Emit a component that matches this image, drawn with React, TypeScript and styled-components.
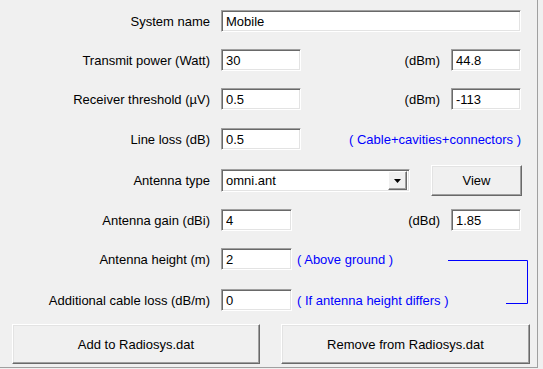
import React from 'react';
import styled, { createGlobalStyle } from 'styled-components';

const GlobalStyle = createGlobalStyle`
  html, body {
    margin: 0;
    padding: 0;
    background: #f0f0f0;
  }
  body {
    font-family: 'Liberation Sans', Arial, sans-serif;
    font-size: 13px;
    color: #000;
  }
`;

const Panel = styled.div`
  width: 538px;
  height: 368px;
  background: #f0f0f0;
  border-right: 1px solid #a0a0a0;
  border-bottom: 1px solid #a0a0a0;
  padding-top: 10px;
  box-sizing: border-box;
  display: flex;
  flex-direction: column;
`;

const Row = styled.div<{ $height?: number; $top?: number; $width?: number }>`
  display: flex;
  align-items: center;
  width: ${({ $width }) => $width ?? 521}px;
  height: ${({ $height }) => $height ?? 22}px;
  margin-top: ${({ $top }) => $top ?? 0}px;
  flex-shrink: 0;
`;

const Label = styled.div`
  width: 210px;
  margin-right: 11px;
  text-align: right;
  white-space: nowrap;
  flex-shrink: 0;
`;

const Field = styled.input<{ $width: number }>`
  width: ${({ $width }) => $width}px;
  height: 22px;
  box-sizing: border-box;
  margin: 0;
  padding: 0 3px 0 4px;
  background: #fff;
  border: 1px solid;
  border-color: #a0a0a0 #fff #fff #a0a0a0;
  box-shadow: inset 1px 1px 0 #696969, inset -1px -1px 0 #e3e3e3;
  font-family: 'Liberation Sans', Arial, sans-serif;
  font-size: 13px;
  color: #000;
  outline: none;
  flex-shrink: 0;
`;

const Unit = styled.span`
  margin-left: auto;
  margin-right: 11px;
  white-space: nowrap;
`;

const Note = styled.span<{ $right?: boolean }>`
  color: #0000ff;
  white-space: nowrap;
  margin-left: ${({ $right }) => ($right ? 'auto' : '5px')};
`;

const Select = styled.div`
  width: 189px;
  height: 23px;
  box-sizing: border-box;
  display: flex;
  align-items: stretch;
  background: #fff;
  border: 1px solid;
  border-color: #a0a0a0 #fff #fff #a0a0a0;
  box-shadow: inset 1px 1px 0 #696969, inset -1px -1px 0 #e3e3e3;
  padding: 1px 2px 1px 1px;
`;

const SelectValue = styled.span`
  flex: 1;
  display: flex;
  align-items: center;
  padding-left: 3px;
`;

const DropButton = styled.span`
  width: 19px;
  display: flex;
  align-items: center;
  justify-content: center;
  background: #f0f0f0;
  border: 1px solid;
  border-color: #fff #696969 #696969 #fff;
  box-shadow: inset -1px -1px 0 #a0a0a0;
  box-sizing: border-box;
`;

const Button = styled.button<{ $width: number; $height: number }>`
  width: ${({ $width }) => $width}px;
  height: ${({ $height }) => $height}px;
  box-sizing: border-box;
  margin: 0;
  padding: 0;
  background: #f0f0f0;
  border: 1px solid;
  border-color: #fff #696969 #696969 #fff;
  box-shadow: inset -1px -1px 0 #a0a0a0, inset 1px 1px 0 #e3e3e3;
  font-family: 'Liberation Sans', Arial, sans-serif;
  font-size: 13px;
  color: #000;
  flex-shrink: 0;
`;

const ViewButton = styled(Button)`
  margin-left: auto;
  margin-right: -1px;
`;

const HeightGroup = styled.div`
  display: flex;
  align-items: flex-start;
  margin-top: 17px;
  width: 528px;
`;

const GroupRows = styled.div`
  width: 448px;
  display: flex;
  flex-direction: column;
  gap: 19px;
`;

const Bracket = styled.svg`
  display: block;
  flex-shrink: 0;
`;

const ButtonBar = styled.div`
  display: flex;
  gap: 21px;
  padding-left: 12px;
  margin-top: 12px;
`;

export default function App() {
  return (
    <>
      <GlobalStyle />
      <Panel>
        <Row>
          <Label>System name</Label>
          <Field $width={300} defaultValue="Mobile" />
        </Row>
        <Row $top={17}>
          <Label>Transmit power (Watt)</Label>
          <Field $width={80} defaultValue="30" />
          <Unit>(dBm)</Unit>
          <Field $width={70} defaultValue="44.8" />
        </Row>
        <Row $top={17}>
          <Label>Receiver threshold (µV)</Label>
          <Field $width={80} defaultValue="0.5" />
          <Unit>(dBm)</Unit>
          <Field $width={70} defaultValue="-113" />
        </Row>
        <Row $top={18}>
          <Label>Line loss (dB)</Label>
          <Field $width={80} defaultValue="0.5" />
          <Note $right>( Cable+cavities+connectors )</Note>
        </Row>
        <Row $top={15} $height={31}>
          <Label>Antenna type</Label>
          <Select>
            <SelectValue>omni.ant</SelectValue>
            <DropButton>
              <svg width="7" height="4" viewBox="0 0 7 4">
                <path d="M0 0H7L3.5 4Z" fill="#000" />
              </svg>
            </DropButton>
          </Select>
          <ViewButton $width={91} $height={31}>View</ViewButton>
        </Row>
        <Row $top={13}>
          <Label>Antenna gain (dBi)</Label>
          <Field $width={71} defaultValue="4" />
          <Unit>(dBd)</Unit>
          <Field $width={70} defaultValue="1.85" />
        </Row>
        <HeightGroup>
          <GroupRows>
            <Row $width={448}>
              <Label>Antenna height (m)</Label>
              <Field $width={71} defaultValue="2" />
              <Note>( Above ground )</Note>
            </Row>
            <Row $width={448}>
              <Label>Additional cable loss (dB/m)</Label>
              <Field $width={71} defaultValue="0" />
              <Note>( If antenna height differs )</Note>
            </Row>
          </GroupRows>
          <Bracket width="80" height="64" viewBox="0 0 80 64">
            <path d="M0 12.5H79.5V55.5H58" fill="none" stroke="#0000ff" strokeWidth="1" />
          </Bracket>
        </HeightGroup>
        <ButtonBar>
          <Button $width={248} $height={40}>Add to Radiosys.dat</Button>
          <Button $width={249} $height={40}>Remove from Radiosys.dat</Button>
        </ButtonBar>
      </Panel>
    </>
  );
}
